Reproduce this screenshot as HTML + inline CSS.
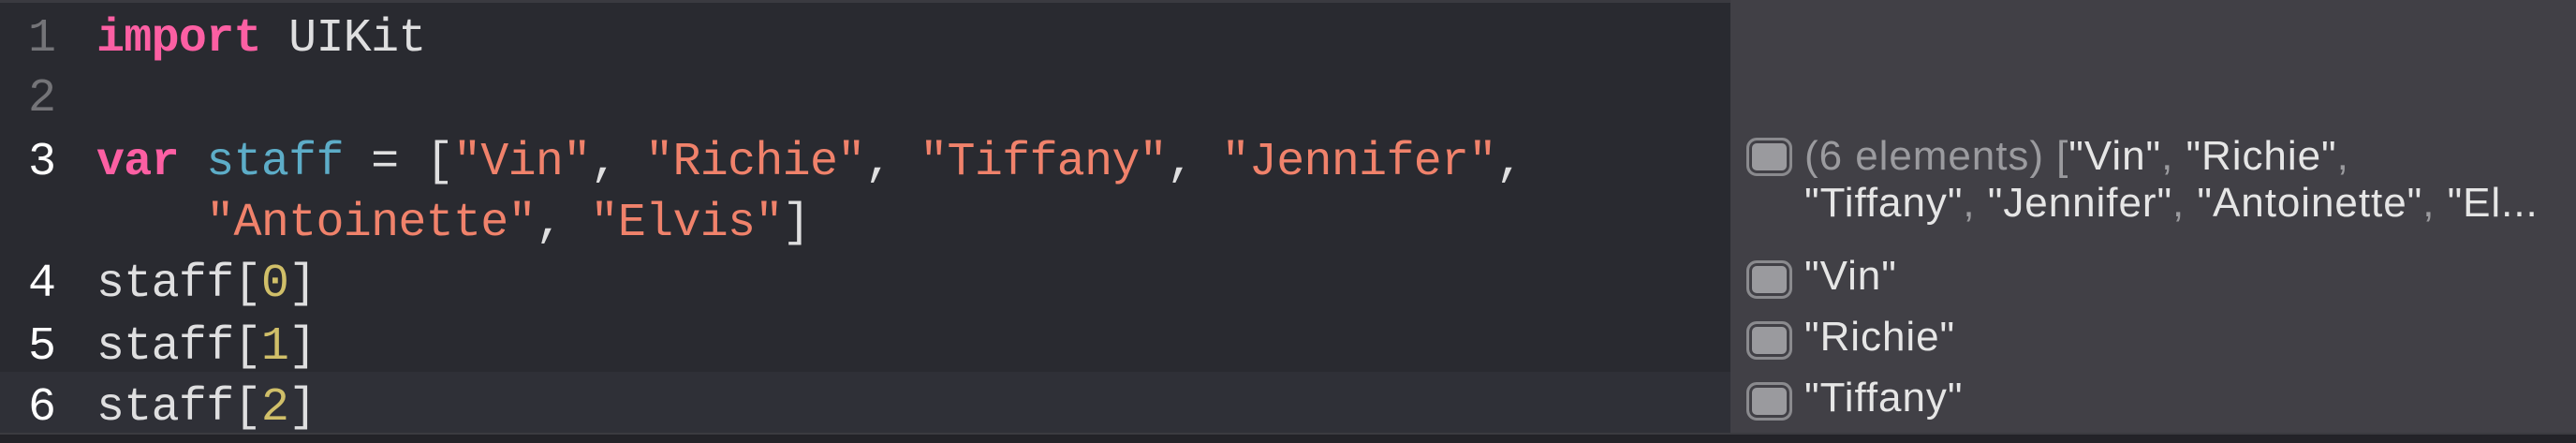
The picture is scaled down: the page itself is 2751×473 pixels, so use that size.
<!DOCTYPE html>
<html><head><style>
html,body{margin:0;padding:0;width:2751px;height:471px;overflow:hidden;background:#292a30;}
.top{position:absolute;left:0;top:0;width:2751px;height:3px;background:#3a3a40}
.code{position:absolute;left:0;top:0;width:1848px;height:471px;background:#292a30}
.hl{position:absolute;left:0;top:397px;width:1848px;height:65px;background:#2f3037}
.bot{position:absolute;left:0;top:462px;width:2751px;height:9px;background:#232328;border-top:2px solid #3b3b40}
.ln,.cl{position:absolute;font-family:"Liberation Mono",monospace;font-size:50px;white-space:pre;line-height:50px;letter-spacing:-0.7px}
.ln{left:30px;color:#fff}
.ln.d{color:#747478}
.cl{left:103px;color:#dfdfe0}
.k{color:#fc5fa3;font-weight:bold}
.b{color:#5dadc8}
.s{color:#f0826b}
.n{color:#d0bf69}
.side{position:absolute;left:1848px;top:0;width:903px;height:471px;background:#414046}
.r{position:absolute;left:1927px;font-family:"Liberation Sans",sans-serif;font-size:44px;color:#e6e6e6;white-space:pre;line-height:44px;letter-spacing:0.95px}
.g{color:#9b9b9f}
.ic{position:absolute;left:1865px;width:43px;height:35px;border:3px solid #8a8a8e;border-radius:11px;background:#9a9a9e;box-shadow:inset 0 0 0 3px #414046}
</style></head><body>
<div class="code"></div>
<div class="hl"></div>
<div class="top"></div>
<div class="side"></div>
<div class="bot"></div>

<div class="ln d" style="top:17px">1</div>
<div class="ln d" style="top:81px">2</div>
<div class="ln" style="top:149px">3</div>
<div class="ln" style="top:279px">4</div>
<div class="ln" style="top:346px">5</div>
<div class="ln" style="top:411px">6</div>

<div class="cl" style="top:17px"><span class="k">import</span> UIKit</div>
<div class="cl" style="top:149px"><span class="k">var</span> <span class="b">staff</span> = [<span class="s">"Vin"</span>, <span class="s">"Richie"</span>, <span class="s">"Tiffany"</span>, <span class="s">"Jennifer"</span>,</div>
<div class="cl" style="top:214px">    <span class="s">"Antoinette"</span>, <span class="s">"Elvis"</span>]</div>
<div class="cl" style="top:279px">staff[<span class="n">0</span>]</div>
<div class="cl" style="top:346px">staff[<span class="n">1</span>]</div>
<div class="cl" style="top:411px">staff[<span class="n">2</span>]</div>

<div class="ic" style="top:147px"></div>
<div class="r" style="top:145px"><span class="g">(6 elements) [</span>"Vin"<span class="g">, </span>"Richie"<span class="g">,</span></div>
<div class="r" style="top:195px">"Tiffany"<span class="g">, </span>"Jennifer"<span class="g">, </span>"Antoinette"<span class="g">, </span>"El...</div>
<div class="ic" style="top:278px"></div>
<div class="r" style="top:273px">"Vin"</div>
<div class="ic" style="top:343px"></div>
<div class="r" style="top:338px">"Richie"</div>
<div class="ic" style="top:408px"></div>
<div class="r" style="top:403px">"Tiffany"</div>
</body></html>
